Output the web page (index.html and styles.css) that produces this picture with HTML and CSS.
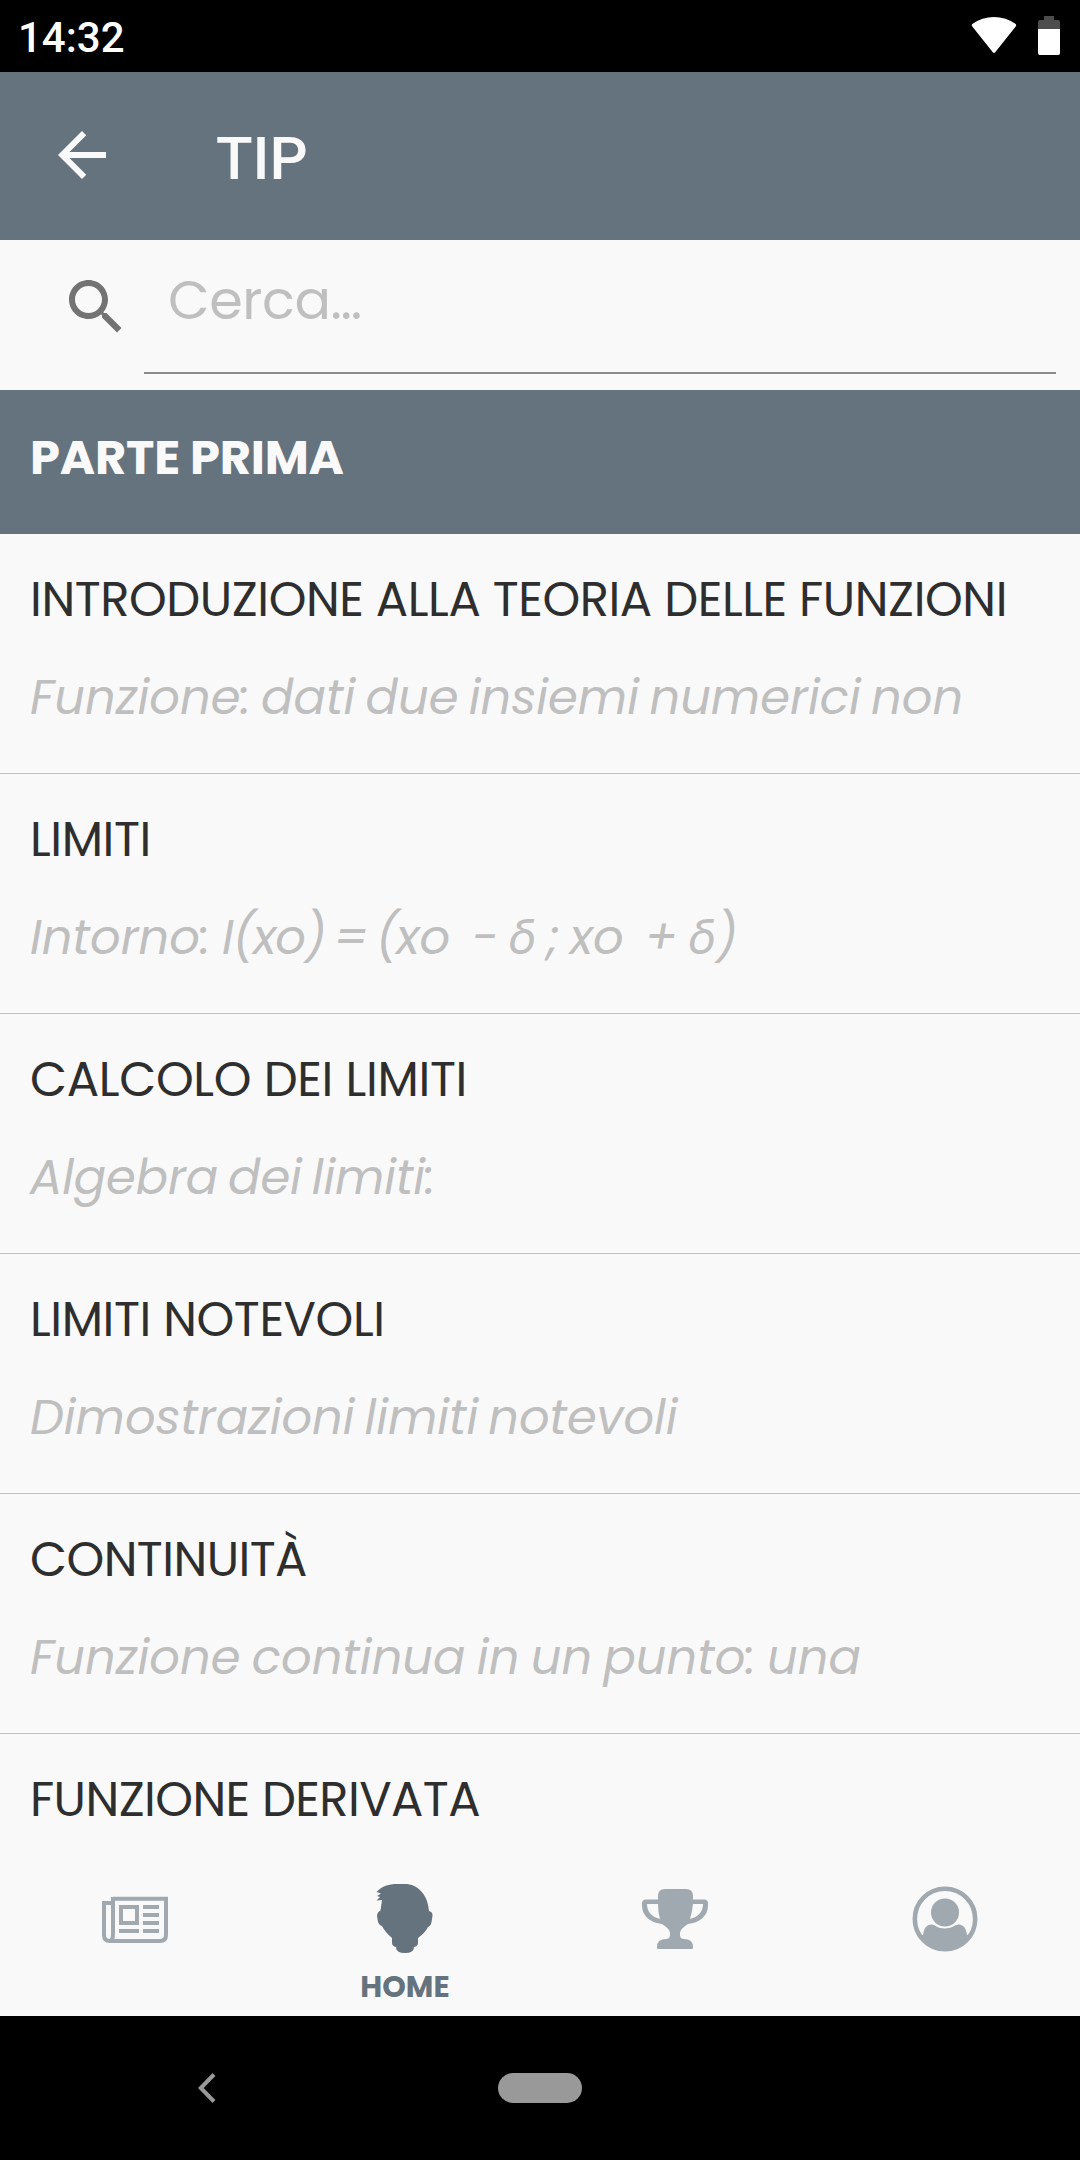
FILE: index.html
```
<!DOCTYPE html>
<html lang="it">
<head>
<meta charset="utf-8">
<title>TIP</title>
<link rel="stylesheet" href="styles.css">
</head>
<body>
<div class="screen">
  <div class="status">
    <span class="clock">14:32</span>
    <svg class="wifi" width="46" height="37" viewBox="0 0 46 37"><path d="M1.2 7.1Q.2 8.300 1.100 9.300L21.800 35.200Q23 36.600 24.200 35.200L44.900 9.300Q45.700 8.300 44.700 7.100Q35 0 23 0T1.200 7.100Z" fill="#fff"/></svg>
    <svg class="battery" width="22" height="39" viewBox="0 0 22 39"><path d="M6 0h10v4h4q2 0 2 2v7H0V6q0-2 2-2h4Z" fill="#4d4d4d"/><path d="M0 13h22v24q0 2-2 2H2q-2 0-2-2Z" fill="#fff"/></svg>
  </div>

  <header class="appbar">
    <svg class="back" width="72" height="72" viewBox="0 0 24 24"><path d="M20 11H7.830l5.590-5.590L12 4l-8 8 8 8 1.410-1.410L7.830 13H20v-2z" fill="#f9f9f9"/></svg>
    <h1 class="title">TIP</h1>
  </header>

  <div class="search">
    <svg class="search-icon" width="72" height="72" viewBox="0 0 24 24"><path d="M15.500 14h-.79l-.28-.27C15.410 12.590 16 11.110 16 9.500 16 5.910 13.090 3 9.500 3S3 5.910 3 9.500 5.910 16 9.500 16c1.610 0 3.090-.59 4.230-1.570l.27.28v.79l5 4.990L20.490 19l-4.990-5zm-6 0C7.010 14 5 11.990 5 9.500S7.010 5 9.500 5 14 7.010 14 9.500 11.990 14 9.500 14z" fill="#737373"/></svg>
    <div class="field"><span class="placeholder">Cerca…</span></div>
  </div>

  <h2 class="section">PARTE PRIMA</h2>

  <main class="list">
    <article class="row intro"><h3>INTRODUZIONE ALLA TEORIA DELLE FUNZIONI</h3><p>Funzione: dati due insiemi numerici non</p></article>
    <article class="row limits"><h3>LIMITI</h3><p><span class="lead">Intorno: </span><span class="tight">I(xo) = (</span>xo&nbsp; − δ ; xo&nbsp; + δ)</p></article>
    <article class="row calculus"><h3>CALCOLO DEI LIMITI</h3><p>Algebra dei limiti:</p></article>
    <article class="row notable"><h3>LIMITI NOTEVOLI</h3><p>Dimostrazioni limiti notevoli</p></article>
    <article class="row continuity"><h3>CONTINUITÀ</h3><p>Funzione continua in un punto: una</p></article>
    <article class="row derivative"><h3>FUNZIONE DERIVATA</h3></article>
  </main>

  <nav class="tabs">
    <div class="tab">
      <svg width="66" height="70" viewBox="0 0 66 70"><g fill="none" stroke="#a0a9b0" stroke-width="4"><path d="M11 14.800H64V51q0 6-6 6H8q-6 0-6-6V19H11M11 13V50q0 7-4 7"/><rect x="19" y="23" width="16" height="16"/><path d="M17 47H37M41 23H57M41 31H57M41 39H57M41 47H57"/></g></svg>
    </div>
    <div class="tab active">
      <svg width="66" height="70" viewBox="0 0 66 70"><path d="M4.500 8C10 2 17 0 25 0H33C45 0 56 10 57 27Q61 28 60.500 32L59.500 38Q59 42 56 43Q53 49 46 54V59Q46 62 42 63Q42 69 33 69T24 63Q20 62 20 59V54Q13 48 10 42Q7 41 6 38L5 32Q5 28 8.500 26.500L10 16L4.500 16.500L8 13L5 12L9 9.500Z" fill="#65737e"/></svg>
      <span>HOME</span>
    </div>
    <div class="tab">
      <svg width="66" height="70" viewBox="0 0 66 70"><path d="M23 5H44Q51 5 51 12V15.500H62Q66 15.500 66 19V22C66 32 57 39 46 40Q38 45 38 49V51Q38 55 42 55Q51 55 51 63V64Q51 65 50 65H16Q15 65 15 64V63Q15 55 24 55Q28 55 28 51V49Q28 45 20 40C9 39 0 32 0 22V19Q0 15.500 4 15.500H16V12Q16 5 23 5ZM5 20C5 28 10 33 18 35Q16 28 16 20ZM51 20Q50 29 48 35C56 33 61 28 61 20Z" fill="#a0a9b0" fill-rule="evenodd"/></svg>
    </div>
    <div class="tab">
      <svg width="66" height="70" viewBox="0 0 66 70"><circle cx="33" cy="35" r="30.200" fill="none" stroke="#a0a9b0" stroke-width="4.600"/><circle cx="33" cy="28.500" r="14" fill="#a0a9b0"/><path d="M6 50L11 51Q12 44 15 42Q18 39.500 22 41Q32 48 44 41Q48 39.500 51 42Q54 44 55 51L60 50Q50 66 33 66T6 50Z" fill="#a0a9b0"/></svg>
    </div>
  </nav>

  <footer class="sysnav">
    <svg class="sys-back" width="20" height="32" viewBox="0 0 20 32"><path d="M17 2.500L3.800 16L17 29.500" fill="none" stroke="#999" stroke-width="4"/></svg>
    <div class="pill"></div>
  </footer>
</div>
</body>
</html>
```
FILE: styles.css
```
* { box-sizing: border-box; }
body { margin: 0; background: #f9f9f9; font-family: Poppins, Inter, sans-serif; }
h1, h2, h3, p { margin: 0; }
svg { display: block; flex: none; }

.screen { width: 1080px; height: 2160px; display: flex; flex-direction: column; overflow: hidden; }

.status { height: 72px; flex: none; background: #000; display: flex; align-items: flex-start; padding: 16px 20px 0 18px; }
.clock { flex: 1; color: #fff; font: 500 42px/44px Roboto, sans-serif; }
.wifi { margin: 1px 21px 0 0; }

.appbar { height: 168px; flex: none; background: #65737e; display: flex; align-items: center; padding: 0 46px; gap: 98px; }
.back { margin-top: -2px; }
.title { color: #f9f9f9; font: 500 60px/70px Roboto, sans-serif; padding-top: 5px; }

.search { height: 150px; flex: none; display: flex; align-items: flex-start; padding: 0 24px 0 60px; gap: 12px; }
.search-icon { margin-top: 31px; }
.field { flex: 1; height: 134px; padding: 25px 0 0 24px; border-bottom: 2px solid #8b8b8b; }
.placeholder { color: #bfbfbf; font-size: 54px; line-height: 70px; display: block; letter-spacing: -0.4px; }

.section { height: 144px; flex: none; background: #65737e; color: #f9f9f9; font-size: 48px; font-weight: 700; line-height: 60px; padding: 38px 30px 0; letter-spacing: -0.2px; }

.list { height: 1314px; flex: none; overflow: hidden; }
.row { height: 240px; padding: 36px 30px 0; border-bottom: 1px solid #bfbfbf; white-space: nowrap; display: flex; flex-direction: column; gap: 38px; }
.row h3 { color: #2e2e2e; font-size: 48px; font-weight: 400; line-height: 60px; letter-spacing: -0.43px; }
.row p { color: #bfbfbf; font-size: 48px; font-style: italic; line-height: 60px; word-spacing: -4px; }
.calculus h3 { letter-spacing: -0.32px; }
.continuity h3, .derivative h3 { letter-spacing: -0.57px; }
.limits p { word-spacing: -3.8px; }
.lead { word-spacing: -2.5px; }
.tight { letter-spacing: -1.2px; word-spacing: -4.5px; }
.calculus p { letter-spacing: -0.17px; }
.notable p { letter-spacing: -0.1px; }
.continuity p { word-spacing: -3px; }

.tabs { height: 168px; flex: none; display: grid; grid-template-columns: repeat(4, 1fr); background: #f9f9f9; }
.tab { display: flex; flex-direction: column; align-items: center; padding-top: 36px; }
.active span { color: #65737e; font-size: 30px; font-weight: 700; line-height: 36px; margin-top: 15px; }

.sysnav { height: 144px; flex: none; background: #000; display: flex; align-items: center; padding-left: 197px; gap: 281px; }
.pill { width: 84px; height: 30px; border-radius: 15px; background: #999; }
```
